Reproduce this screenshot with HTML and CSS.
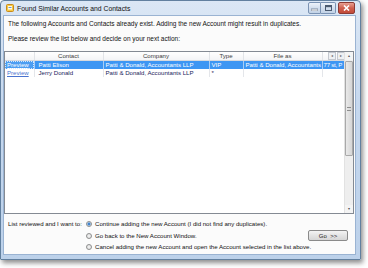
FILE: index.html
```html
<!DOCTYPE html>
<html lang="en">
<head>
    <meta charset="UTF-8">
    <title>Found Similar Accounts and Contacts</title>
    <link rel="stylesheet" href="styles.css">
</head>
<body>
    <div class="window">
        <div class="titlebar">
            <svg class="app-icon" width="8" height="8" viewBox="0 0 8 8">
                <rect x="0.5" y="0.5" width="7" height="7" rx="1" fill="#f6c945" stroke="#c98a1a"/>
                <rect x="2" y="2" width="4" height="3.5" fill="#fffbe8"/>
                <rect x="2.5" y="3" width="3" height="0.8" fill="#4a7fc8"/>
            </svg>
            <span class="title">Found Similar Accounts and Contacts</span>
            <div class="caption-buttons">
                <span class="cap-btn cap-min">
                    <svg width="7" height="5" viewBox="0 0 7 5"><rect x="0" y="3" width="7" height="2" fill="#fff" stroke="#4a5a70" stroke-width="0.6"/></svg>
                </span>
                <span class="cap-btn cap-max">
                    <svg width="7" height="6" viewBox="0 0 7 6"><rect x="0.5" y="0.5" width="6" height="5" fill="none" stroke="#4a5a70"/><rect x="1" y="1" width="5" height="1.2" fill="#4a5a70"/></svg>
                </span>
                <span class="cap-btn cap-close">
                    <svg width="7" height="6" viewBox="0 0 7 6"><path d="M1 0.5 L6 5.5 M6 0.5 L1 5.5" stroke="#fff" stroke-width="1.6"/></svg>
                </span>
            </div>
        </div>

        <div class="client">
            <p class="intro">The following Accounts and Contacts already exist. Adding the new Account might result in duplicates.</p>
            <p class="intro second">Please review the list below and decide on your next action:</p>

            <div class="list">
                <div class="list-body">
                    <table class="grid">
                        <colgroup>
                            <col class="c-preview">
                            <col class="c-contact">
                            <col class="c-company">
                            <col class="c-type">
                            <col class="c-fileas">
                            <col class="c-extra">
                        </colgroup>
                        <thead>
                            <tr>
                                <th></th>
                                <th>Contact</th>
                                <th>Company</th>
                                <th>Type</th>
                                <th>File as</th>
                                <th class="th-nav">
                                    <span class="nav-btn">&#9666;</span><span class="nav-btn">&#9656;</span>
                                </th>
                            </tr>
                        </thead>
                        <tbody>
                            <tr class="selected">
                                <td class="preview focused"><a href="#">Preview</a></td>
                                <td class="contact">Patti Elison</td>
                                <td>Patti &amp; Donald, Accountants LLP</td>
                                <td>VIP</td>
                                <td>Patti &amp; Donald, Accountants</td>
                                <td class="extra">77 st, P</td>
                            </tr>
                            <tr>
                                <td class="preview"><a href="#">Preview</a></td>
                                <td class="contact">Jerry Donald</td>
                                <td>Patti &amp; Donald, Accountants LLP</td>
                                <td>*</td>
                                <td></td>
                                <td class="extra"></td>
                            </tr>
                        </tbody>
                    </table>
                </div>
                <div class="scrollbar">
                    <span class="sb-arrow">&#9652;</span>
                    <span class="sb-thumb"><span class="grip"></span></span>
                    <span class="sb-track"></span>
                    <span class="sb-arrow">&#9662;</span>
                </div>
            </div>

            <div class="choices">
                <span class="choices-label">List reviewed and I want to:</span>
                <label class="option opt-1"><span class="radio checked"></span>Continue adding the new Account (I did not find any duplicates).</label>
                <label class="option opt-2"><span class="radio"></span>Go back to the New Account Window.</label>
                <button class="go-btn">Go &nbsp;&gt;&gt;</button>
                <label class="option opt-3"><span class="radio"></span>Cancel adding the new Account and open the Account selected in the list above.</label>
            </div>
        </div>
    </div>
</body>
</html>
```

FILE: styles.css
```css
body {
    margin: 0;
    width: 368px;
    height: 268px;
    background: #ffffff;
    font-family: "Liberation Sans", Arial, sans-serif;
    font-size: 6.5px;
    color: #111;
    overflow: hidden;
}
.window {
    width: 361px;
    height: 260px;
    box-sizing: border-box;
    border: 1px solid #62809f;
    border-radius: 4px 4px 1px 1px;
    padding: 0 5px 5px 3px;
    background: linear-gradient(#dbe7f5, #c6d8ee 40%, #bcd1ea);
    box-shadow: 2px 3px 5px rgba(0, 0, 0, 0.45);
    display: flex;
    flex-direction: column;
}
.titlebar {
    height: 15px;
    display: flex;
    align-items: flex-start;
}
.app-icon {
    margin: 3px 3px 0 2px;
    flex-shrink: 0;
}
.title {
    font-size: 6.8px;
    line-height: 8px;
    margin-top: 3.5px;
    color: #111;
}
.caption-buttons {
    margin-left: auto;
    margin-top: 1px;
    display: flex;
    gap: 2px;
}
.cap-btn {
    height: 10px;
    display: flex;
    align-items: center;
    justify-content: center;
    border: 1px solid #7b93b3;
    background: linear-gradient(#eef3fa, #d3dfee 50%, #c2d2e6);
}
.cap-min {
    width: 11px;
    border-radius: 2px 0 0 2px;
}
.cap-max {
    width: 14px;
    border-left: none;
    border-radius: 0 2px 2px 0;
    margin-left: -2px;
}
.cap-close {
    width: 15px;
    border-color: #8c3a34;
    border-radius: 2px;
    background: linear-gradient(#e8a093, #d0604f 50%, #c24a38);
}
.client {
    flex: 1;
    background: #fbfbfb;
    box-shadow: 0 0 0 1px #9ab3d2;
    display: flex;
    flex-direction: column;
}
.intro {
    margin: 4px 0 0 4px;
    line-height: 8px;
    white-space: nowrap;
}
.intro.second {
    margin-top: 7px;
}
.list {
    margin-top: 8px;
    width: 350px;
    height: 163px;
    box-sizing: border-box;
    border: 1px solid #848a93;
    background: #fff;
    display: flex;
}
.list-body {
    flex: 1;
    overflow: hidden;
}
.grid {
    border-collapse: collapse;
    table-layout: fixed;
    width: 340px;
    font-size: 6.1px;
}
.c-preview { width: 29px; }
.c-contact { width: 69px; }
.c-company { width: 106px; }
.c-type { width: 34px; }
.c-fileas { width: 79px; }
.c-extra { width: 23px; }
.grid th {
    height: 8px;
    padding: 0;
    font-weight: normal;
    color: #3c3c3c;
    line-height: 8px;
    border-right: 1px solid #e2e4e8;
    border-bottom: 1px solid #d6d9de;
    background: linear-gradient(#ffffff, #f3f4f6);
    text-align: center;
}
.grid th.th-nav {
    border-right: none;
    text-align: right;
}
.nav-btn {
    display: inline-block;
    width: 6px;
    height: 6px;
    margin-left: 1px;
    border: 1px solid #c4c8cf;
    background: #eef0f3;
    color: #666;
    font-size: 4px;
    line-height: 6px;
    text-align: center;
    vertical-align: middle;
}
.grid td {
    height: 8px;
    padding: 0 0 0 2px;
    line-height: 8px;
    white-space: nowrap;
    overflow: hidden;
    border-right: 1px solid #e4e6ea;
    color: #211c5c;
}
.grid td.contact {
    padding-left: 4px;
}
.grid td.extra {
    padding-left: 1px;
    letter-spacing: -0.25px;
}
.grid a {
    color: #4a73cf;
}
.grid tr.selected td {
    background: #3d96f3;
    color: #fff;
    border-right-color: #a9cdf5;
}
.grid tr.selected td.preview {
    background: #4c9ef2;
    outline: 1px dotted #d6e8fb;
    outline-offset: -1px;
}
.grid tr.selected a {
    color: #ffffff;
}
.scrollbar {
    width: 8px;
    display: flex;
    flex-direction: column;
    background: #eeeeee;
    border-left: 1px solid #e2e2e2;
}
.sb-arrow {
    height: 8px;
    font-size: 4px;
    line-height: 8px;
    text-align: center;
    color: #555;
    background: #f4f4f4;
}
.sb-thumb {
    height: 95px;
    margin: 1px 0 0 0;
    box-sizing: border-box;
    border: 1px solid #a9a9a9;
    border-radius: 1px;
    background: linear-gradient(90deg, #e9e9e9, #d6d6d6);
    display: flex;
    align-items: center;
    justify-content: center;
}
.grip {
    width: 4px;
    height: 4px;
    border-top: 1px solid #8d8d8d;
    border-bottom: 1px solid #8d8d8d;
    box-sizing: border-box;
}
.sb-track {
    flex: 1;
}
.choices {
    margin: 6px 7px 0 4px;
    display: grid;
    grid-template-columns: 78px 1fr 40px;
    grid-template-rows: 8px 8px 8px;
    row-gap: 3.5px;
    font-size: 6.1px;
    line-height: 8px;
}
.choices-label {
    grid-column: 1;
    grid-row: 1;
}
.option {
    display: flex;
    align-items: center;
    white-space: nowrap;
}
.opt-1 { grid-column: 2 / 4; grid-row: 1; }
.opt-2 { grid-column: 2; grid-row: 2; }
.opt-3 { grid-column: 2 / 4; grid-row: 3; }
.radio {
    width: 6px;
    height: 6px;
    box-sizing: border-box;
    margin-right: 3px;
    border: 1px solid #8e8f8f;
    border-radius: 50%;
    background: radial-gradient(#f4f4f4, #dcdcdc);
}
.radio.checked {
    background: radial-gradient(circle, #2a66b8 0, #5aa2e6 1.4px, #e4e4e4 1.8px);
}
.go-btn {
    grid-column: 3;
    grid-row: 2;
    align-self: center;
    height: 11px;
    padding: 0;
    font-family: "Liberation Sans", Arial, sans-serif;
    font-size: 6px;
    color: #222;
    border: 1px solid #8a8a8a;
    border-radius: 2px;
    background: linear-gradient(#f4f4f4, #e4e4e4 50%, #d6d6d6);
}
```
